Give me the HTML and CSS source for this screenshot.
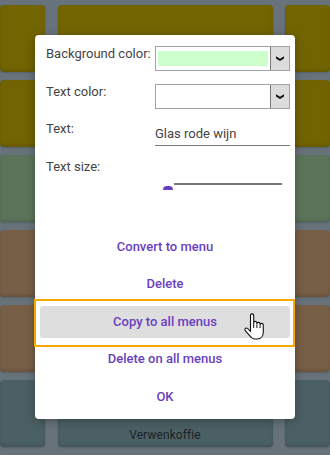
FILE: index.html
```html
<!DOCTYPE html>
<html>
<head>
<meta charset="utf-8">
<link rel="stylesheet" href="styles.css">
</head>
<body>
<div class="board">
  <div class="tile olive"></div><div class="tile olive"></div><div class="tile olive"></div>
  <div class="tile olive"></div><div class="tile olive"></div><div class="tile olive"></div>
  <div class="tile green"></div><div class="tile green"></div><div class="tile green"></div>
  <div class="tile brown"></div><div class="tile brown"></div><div class="tile brown"></div>
  <div class="tile brown"></div><div class="tile brown"></div><div class="tile brown"></div>
  <div class="tile slate"></div><div class="tile slate"><span class="tile-label">Verwenkoffie</span></div><div class="tile slate"></div>
</div>

<div class="dialog">
  <div class="form">
    <div class="label">Background color:</div>
    <div class="select">
      <div class="swatch swatch-green"></div>
      <div class="arrow"><svg width="10" height="7" viewBox="0 0 10 7"><path d="M1 1.2 L5 3.8 L9 1.2 L9 3.4 L5 6 L1 3.4 Z" fill="#111"/></svg></div>
    </div>

    <div class="label">Text color:</div>
    <div class="select">
      <div class="swatch"></div>
      <div class="arrow"><svg width="10" height="7" viewBox="0 0 10 7"><path d="M1 1.2 L5 3.8 L9 1.2 L9 3.4 L5 6 L1 3.4 Z" fill="#111"/></svg></div>
    </div>

    <div class="label label-text">Text:</div>
    <div class="input">Glas rode wijn</div>

    <div class="label">Text size:</div>
    <div class="slider">
      <div class="track"></div>
      <div class="thumb"></div>
    </div>
  </div>

  <div class="actions">
    <div class="btn">Convert to menu</div>
    <div class="btn">Delete</div>
    <div class="btn btn-focus">Copy to all menus</div>
    <div class="btn">Delete on all menus</div>
    <div class="btn">OK</div>
  </div>

  <svg class="cursor" width="20" height="27" viewBox="0 0 20 27">
    <path d="M6.5 15 V2.5 a1.6 1.6 0 0 1 3.2 0 V10.5 V10 a1.6 1.6 0 0 1 3.2 0 V11 a1.6 1.6 0 0 1 3.2 0 V12 a1.6 1.6 0 0 1 3.2 0 V19 c0 4 -2.2 7 -6 7 h-2.5 c-2.6 0 -3.6 -1.2 -5 -3.2 L1.3 17.6 c-0.8 -1.1 -0.2 -2.6 1.1 -2.6 c0.9 0 1.5 0.5 2.1 1.3 L6.5 18.5 Z" fill="#fff" stroke="#111" stroke-width="1.1" stroke-linejoin="round"/>
    <path d="M9.7 11 V15 M12.9 11.5 V15 M16.1 12.5 V15" stroke="#111" stroke-width="1" fill="none"/>
  </svg>
</div>
</body>
</html>
```

FILE: styles.css
```css
html, body {
  margin: 0;
  padding: 0;
  width: 330px;
  height: 455px;
  overflow: hidden;
  font-family: Roboto, "Liberation Sans", Arial, sans-serif;
  background: #68727a;
}

.board {
  display: grid;
  grid-template-columns: 45px 215px 1fr;
  grid-auto-rows: 67px;
  column-gap: 12.5px;
  row-gap: 8px;
  padding-top: 5px;
  width: 330px;
  box-sizing: border-box;
}

.tile {
  border-radius: 4px;
  box-shadow: inset 0 -2px 3px rgba(0,0,0,0.12), 0 1px 2px rgba(0,0,0,0.15);
  display: flex;
  align-items: flex-end;
  justify-content: center;
}

.olive { background: #726400; }
.green { background: #5b755b; }
.brown { background: #775e46; }
.slate { background: #4b6064; }

.tile-label {
  font-size: 12px;
  color: #1c2324;
  padding-bottom: 5px;
  letter-spacing: 0.1px;
}

.dialog {
  position: absolute;
  left: 35px;
  top: 35px;
  width: 260px;
  height: 384px;
  box-sizing: border-box;
  background: #fff;
  border-radius: 4px;
  box-shadow: 0 2px 10px rgba(0,0,0,0.3);
  padding: 11px 5px 0 5px;
}

.form {
  display: grid;
  grid-template-columns: 109px 135px;
  grid-template-rows: 25px 25px 25px 32px;
  row-gap: 12.5px;
  padding-left: 6px;
}

.label {
  font-size: 13px;
  line-height: 15px;
  color: #444;
  white-space: nowrap;
}

.select {
  display: flex;
  border: 1px solid #a3a3a3;
  box-sizing: border-box;
  height: 25px;
  background: #fff;
}

.swatch {
  flex: 1;
  margin: 4px 2px 4px 2px;
  background: #fff;
}

.swatch-green {
  background: #ccffcc;
}

.arrow {
  width: 18px;
  background: #dcdcdc;
  border-left: 1px solid #7a7a7a;
  display: flex;
  align-items: center;
  justify-content: center;
}

.input {
  font-size: 13px;
  color: #444;
  line-height: 24px;
  height: 25px;
  box-sizing: border-box;
  border-bottom: 1px solid #7a7a7a;
  padding-top: 1px;
}

.slider {
  position: relative;
  height: 32px;
}

.track {
  margin-top: 24px;
  margin-left: 19px;
  width: 108px;
  height: 2px;
  background: #777;
}

.thumb {
  position: absolute;
  left: 8px;
  top: 27px;
  width: 10px;
  height: 4px;
  background: #6a3fbe;
  border-radius: 5px 5px 0 0;
}

.actions {
  display: flex;
  flex-direction: column;
  margin-top: 37px;
}

.btn {
  height: 37.5px;
  display: flex;
  align-items: center;
  justify-content: center;
  font-size: 13px;
  font-weight: 500;
  color: #6a3fbf;
  box-sizing: border-box;
}

.btn-focus {
  position: relative;
  height: 32px;
  margin: 3px 0 2.5px 0;
  background: #dedede;
  border-radius: 3px;
}

.btn-focus::after {
  content: "";
  position: absolute;
  top: -7px;
  bottom: -9px;
  left: -6px;
  right: -5px;
  border: 2px solid #f4aa00;
  pointer-events: none;
}

.cursor {
  position: absolute;
  left: 209px;
  top: 278px;
}
```
